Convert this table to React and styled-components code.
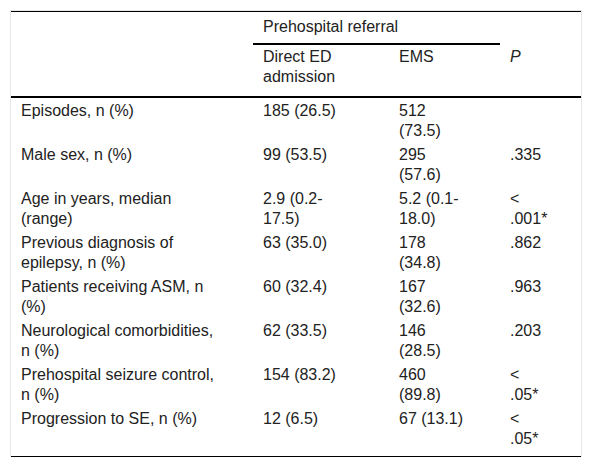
import React from 'react'
import styled, { createGlobalStyle } from 'styled-components'

const Global = createGlobalStyle`
  body {
    margin: 0;
    background: #fff;
    font-family: "Liberation Sans", Arial, sans-serif;
    color: #222;
  }
`

const rows = [
  ['Episodes, n (%)', '185 (26.5)', '512 (73.5)', ''],
  ['Male sex, n (%)', '99 (53.5)', '295 (57.6)', '.335'],
  ['Age in years, median (range)', '2.9 (0.2-17.5)', '5.2 (0.1-18.0)', '< .001*'],
  ['Previous diagnosis of epilepsy, n (%)', '63 (35.0)', '178 (34.8)', '.862'],
  ['Patients receiving ASM, n (%)', '60 (32.4)', '167 (32.6)', '.963'],
  ['Neurological comorbidities, n (%)', '62 (33.5)', '146 (28.5)', '.203'],
  ['Prehospital seizure control, n (%)', '154 (83.2)', '460 (89.8)', '< .05*'],
  ['Progression to SE, n (%)', '12 (6.5)', '67 (13.1)', '< .05*'],
]

// wrap widths per column, tuned to the reference's line breaks
const wraps = [199, 84, 68, 40]

export default function App() {
  return (
    <>
      <Global />
      <Frame>
        <Table>
          <colgroup>
            <col style={{ width: 242 }} />
            <col style={{ width: 136 }} />
            <col style={{ width: 111 }} />
            <col style={{ width: 81 }} />
          </colgroup>
          <thead>
            <tr>
              <CornerCell rowSpan={2} />
              <GroupCell colSpan={2}>Prehospital referral</GroupCell>
              <PCell rowSpan={2}>
                <Italic>P</Italic>
              </PCell>
            </tr>
            <tr>
              <HeadCell>
                <Wrap $w={wraps[1]}>Direct ED admission</Wrap>
              </HeadCell>
              <HeadCell>
                <Wrap $w={wraps[2]}>EMS</Wrap>
              </HeadCell>
            </tr>
          </thead>
          <tbody>
            {rows.map((r, i) => (
              <tr key={i}>
                {r.map((c, j) => (
                  <Cell key={j} $end={i === rows.length - 1}>
                    <Wrap $w={wraps[j]}>{c}</Wrap>
                  </Cell>
                ))}
              </tr>
            ))}
          </tbody>
        </Table>
      </Frame>
    </>
  )
}

const Frame = styled.div`
  margin: 10px 0 0 10px;
  width: 570px;
  border: 1px solid #e6e6e6;
  border-bottom: none;
`

const Table = styled.table`
  width: 570px;
  table-layout: fixed;
  border-collapse: collapse;
  border-top: 1px solid #000;
  border-bottom: 1px solid #000;
  font-size: 16px;
  line-height: 20px;
`

const HeadCell = styled.th`
  text-align: left;
  font-weight: normal;
  vertical-align: top;
  padding: 2px 10px 9px;
  border-bottom: 2px solid #000;
`

const CornerCell = styled(HeadCell)`
  padding: 0;
`

const PCell = styled(HeadCell)`
  vertical-align: middle;
  padding: 6px 10px 0;
`

const GroupCell = styled.th`
  text-align: left;
  font-weight: normal;
  padding: 5px 10px 6px;
  border-bottom: 2px solid #000;
`

const Cell = styled.td`
  vertical-align: top;
  padding: 3px 10px ${p => (p.$end ? '7px' : '1px')};
`

const Wrap = styled.div`
  max-width: ${p => p.$w}px;
`

const Italic = styled.span`
  font-style: italic;
`
